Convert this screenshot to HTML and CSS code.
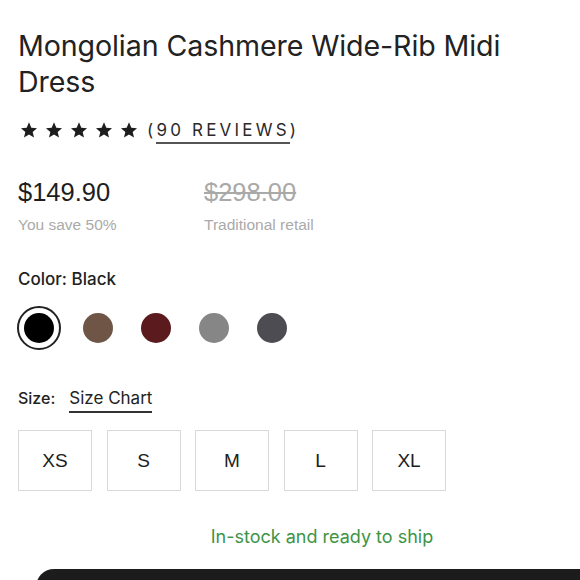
FILE: index.html
```html
<!DOCTYPE html>
<html>
<head>
<meta charset="utf-8">
<link rel="stylesheet" href="styles.css">
</head>
<body>
<div class="page">
  <h1 class="title">Mongolian Cashmere Wide-Rib Midi Dress</h1>
  <div class="rating">
    <span class="stars">
      <svg viewBox="0 0 24 24" class="star"><path d="M12 1.8l3.1 7.1 7.6.6-5.8 5 1.8 7.5L12 18l-6.7 4 1.8-7.5-5.8-5 7.6-.6z"/></svg>
      <svg viewBox="0 0 24 24" class="star"><path d="M12 1.8l3.1 7.1 7.6.6-5.8 5 1.8 7.5L12 18l-6.7 4 1.8-7.5-5.8-5 7.6-.6z"/></svg>
      <svg viewBox="0 0 24 24" class="star"><path d="M12 1.8l3.1 7.1 7.6.6-5.8 5 1.8 7.5L12 18l-6.7 4 1.8-7.5-5.8-5 7.6-.6z"/></svg>
      <svg viewBox="0 0 24 24" class="star"><path d="M12 1.8l3.1 7.1 7.6.6-5.8 5 1.8 7.5L12 18l-6.7 4 1.8-7.5-5.8-5 7.6-.6z"/></svg>
      <svg viewBox="0 0 24 24" class="star"><path d="M12 1.8l3.1 7.1 7.6.6-5.8 5 1.8 7.5L12 18l-6.7 4 1.8-7.5-5.8-5 7.6-.6z"/></svg>
    </span>
    <span class="reviews">(<span class="reviews-link">90 REVIEWS</span>)</span>
  </div>
  <div class="prices">
    <div class="price-col">
      <div class="price">$149.90</div>
      <div class="price-note">You save 50%</div>
    </div>
    <div class="price-col">
      <div class="price old">$298.00</div>
      <div class="price-note">Traditional retail</div>
    </div>
  </div>
  <div class="label">Color: Black</div>
  <div class="swatches">
    <span class="swatch selected"><span class="dot" style="background:#000"></span></span>
    <span class="swatch"><span class="dot" style="background:#6e5546"></span></span>
    <span class="swatch"><span class="dot" style="background:#5a1a1e"></span></span>
    <span class="swatch"><span class="dot" style="background:#868686"></span></span>
    <span class="swatch"><span class="dot" style="background:#4c4c52"></span></span>
  </div>
  <div class="size-row">
    <span class="label-inline">Size:</span>
    <span class="size-chart">Size Chart</span>
  </div>
  <div class="sizes">
    <button class="size">XS</button>
    <button class="size">S</button>
    <button class="size">M</button>
    <button class="size">L</button>
    <button class="size">XL</button>
  </div>
  <div class="stock">In-stock and ready to ship</div>
  <div class="cta"></div>
</div>
</body>
</html>
```
FILE: styles.css
```css
html, body {
  margin: 0;
  padding: 0;
  background: #fff;
  overflow: hidden;
}
body {
  width: 580px;
  height: 580px;
  font-family: "Lato", "Liberation Sans", sans-serif;
  color: #1d1d1d;
}
.page {
  padding: 28px 0 0 18px;
}
.title {
  margin: 0;
  font-family: "Inter", sans-serif;
  font-weight: 400;
  font-size: 28.6px;
  line-height: 36px;
  letter-spacing: -0.1px;
  color: #222;
  width: 540px;
}
.rating {
  display: flex;
  align-items: center;
  margin-top: 18px;
  height: 24px;
}
.stars {
  display: flex;
  gap: 7px;
  margin-left: 2px;
}
.star {
  width: 18px;
  height: 18px;
  fill: #1d1d1d;
}
.reviews {
  margin-left: 9px;
  font-family: "Inter", sans-serif;
  font-size: 17px;
  letter-spacing: 3.2px;
  color: #2a2a2a;
}
.reviews-link {
  border-bottom: 2px solid #555;
  padding-bottom: 2px;
}
.prices {
  display: flex;
  margin-top: 35px;
}
.price-col {
  width: 186px;
}
.price {
  font-family: "Liberation Sans", sans-serif;
  font-size: 25.5px;
  line-height: 30px;
  color: #1d1d1d;
}
.price.old {
  color: #a9a9a9;
  text-decoration: line-through;
}
.price-note {
  margin-top: 9px;
  font-family: "Liberation Sans", sans-serif;
  font-size: 15.5px;
  color: #aaa;
}
.label {
  margin-top: 35px;
  font-family: "Inter", sans-serif;
  font-weight: 500;
  font-size: 17px;
  color: #222;
}
.swatches {
  display: flex;
  align-items: center;
  gap: 14px;
  margin-top: 17px;
  margin-left: -1px;
}
.swatch {
  width: 44px;
  height: 44px;
  border-radius: 50%;
  display: flex;
  align-items: center;
  justify-content: center;
  box-sizing: border-box;
}
.swatch.selected {
  border: 2px solid #222;
  margin-right: 1px;
}
.dot {
  width: 30px;
  height: 30px;
  border-radius: 50%;
}
.size-row {
  display: flex;
  align-items: baseline;
  gap: 14px;
  margin-top: 38px;
  font-family: "Inter", sans-serif;
  font-size: 17px;
  color: #222;
}
.label-inline {
  font-weight: 500;
  font-size: 16px;
}
.size-chart {
  border-bottom: 2px solid #333;
  padding-bottom: 3px;
}
.sizes {
  display: flex;
  gap: 14.5px;
  margin-top: 17px;
}
.size {
  width: 74px;
  height: 61px;
  background: #fff;
  border: 1.5px solid #d9d9d9;
  font-family: "Liberation Sans", sans-serif;
  font-size: 19px;
  color: #1d1d1d;
  padding: 0;
}
.stock {
  margin-top: 35px;
  width: 608px;
  text-align: center;
  font-family: "Inter", sans-serif;
  font-size: 18px;
  color: #3d9446;
}
.cta {
  margin-top: 22px;
  margin-left: 18px;
  width: 600px;
  height: 60px;
  background: #1c1c1c;
  border-radius: 18px 0 0 0;
}
```
